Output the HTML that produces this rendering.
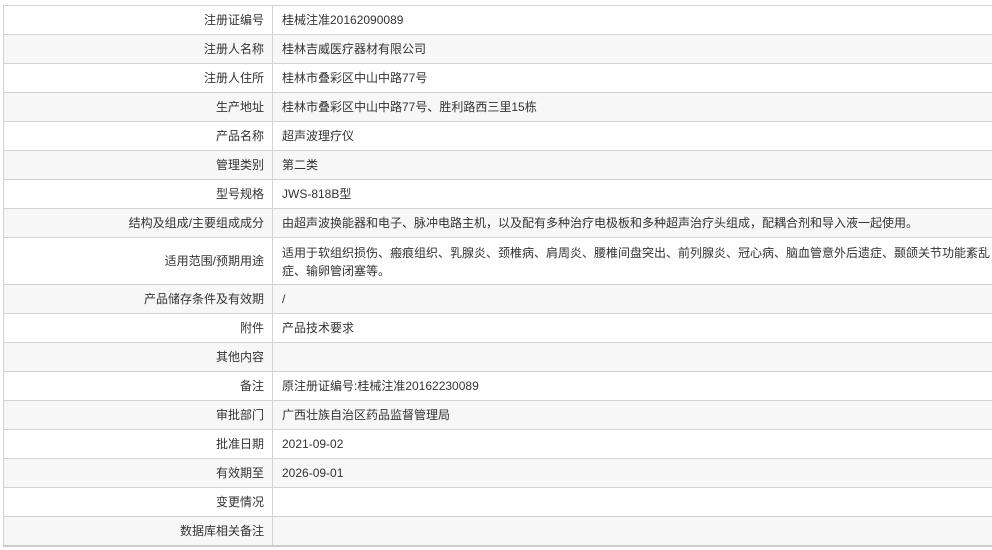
<!DOCTYPE html>
<html><head><meta charset="utf-8"><style>
body{margin:0;background:#fff;font-family:"Liberation Sans","Noto Sans CJK SC",sans-serif;font-size:12px;color:#333;}
table{position:absolute;left:3px;top:5px;width:992px;border-collapse:collapse;}
td{border:1px solid #d3d3d3;height:28px;padding:0;line-height:18px;}
td.l{width:260px;text-align:right;padding-right:8px;}
td.v{padding-left:9px;}
tr:nth-child(even) td{background:#f7f7f7;}
tr:last-child td{border-bottom:2px solid #ccc;}
</style></head><body>
<table>
<tr><td class="l">注册证编号</td><td class="v">桂械注准20162090089</td></tr>
<tr><td class="l">注册人名称</td><td class="v">桂林吉威医疗器材有限公司</td></tr>
<tr><td class="l">注册人住所</td><td class="v">桂林市叠彩区中山中路77号</td></tr>
<tr><td class="l">生产地址</td><td class="v">桂林市叠彩区中山中路77号、胜利路西三里15栋</td></tr>
<tr><td class="l">产品名称</td><td class="v">超声波理疗仪</td></tr>
<tr><td class="l">管理类别</td><td class="v">第二类</td></tr>
<tr><td class="l">型号规格</td><td class="v">JWS-818B型</td></tr>
<tr><td class="l">结构及组成/主要组成成分</td><td class="v">由超声波换能器和电子、脉冲电路主机，以及配有多种治疗电极板和多种超声治疗头组成，配耦合剂和导入液一起使用。</td></tr>
<tr><td class="l" style="height:46px">适用范围/预期用途</td><td class="v" style="padding-top:2px">适用于软组织损伤、瘢痕组织、乳腺炎、颈椎病、肩周炎、腰椎间盘突出、前列腺炎、冠心病、脑血管意外后遗症、颞颌关节功能紊乱症、输卵管闭塞等。</td></tr>
<tr><td class="l">产品储存条件及有效期</td><td class="v">/</td></tr>
<tr><td class="l">附件</td><td class="v">产品技术要求</td></tr>
<tr><td class="l">其他内容</td><td class="v"></td></tr>
<tr><td class="l">备注</td><td class="v">原注册证编号:桂械注准20162230089</td></tr>
<tr><td class="l">审批部门</td><td class="v">广西壮族自治区药品监督管理局</td></tr>
<tr><td class="l">批准日期</td><td class="v">2021-09-02</td></tr>
<tr><td class="l">有效期至</td><td class="v">2026-09-01</td></tr>
<tr><td class="l">变更情况</td><td class="v"></td></tr>
<tr><td class="l">数据库相关备注</td><td class="v"></td></tr>
</table>
</body></html>
